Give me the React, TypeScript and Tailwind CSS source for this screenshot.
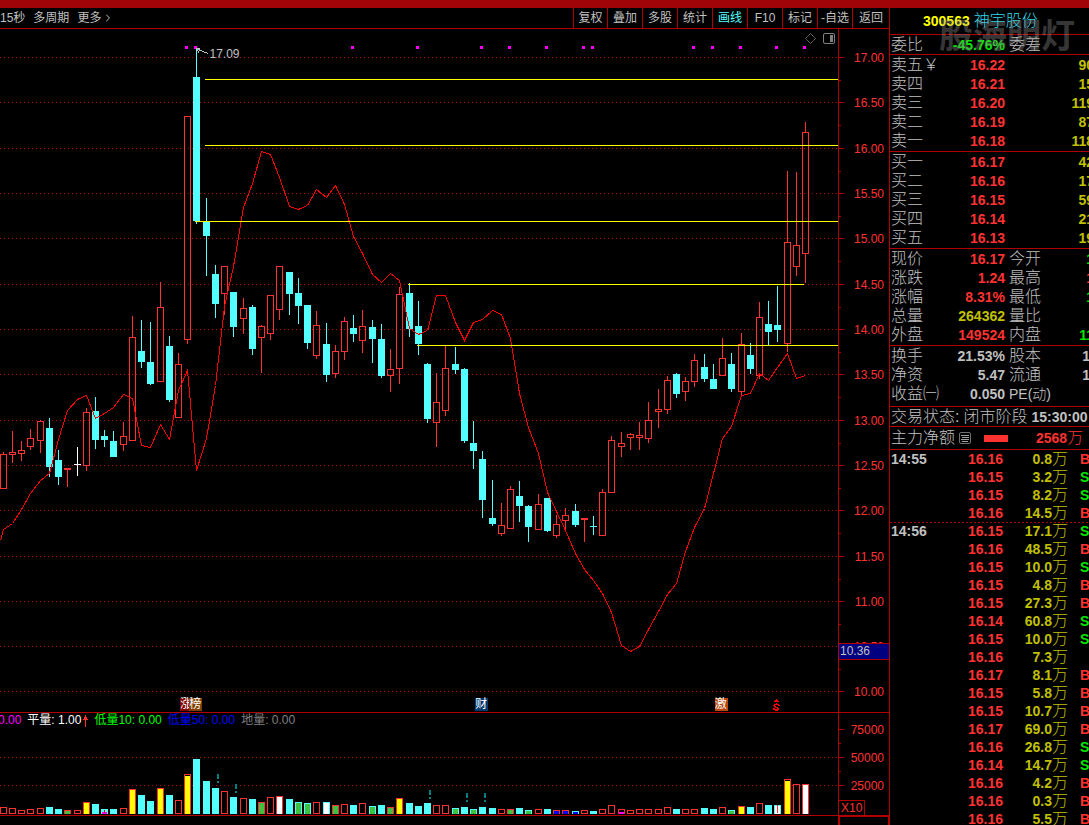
import { ChevronRight } from "lucide-react";

type Kind = "up" | "down" | "flat";
// x centre, high, body top, body bottom, low, direction
type Candle = [number, number, number, number, number, Kind];

const candles: Candle[] = [
  [3, 452, 454, 489, 489, "up"], [12, 431, 452, 455, 463, "up"], [21, 441, 450, 454, 461, "up"],
  [30, 429, 438, 447, 450, "up"], [40, 420, 421, 441, 453, "up"], [49, 418, 428, 467, 477, "down"],
  [58, 450, 460, 477, 485, "down"], [67, 468, 468, 470, 487, "up"], [77, 447, 464, 465, 476, "flat"],
  [86, 408, 412, 466, 471, "up"], [95, 397, 411, 440, 449, "down"], [104, 430, 436, 440, 447, "down"],
  [113, 431, 441, 457, 457, "down"], [123, 422, 436, 445, 451, "up"], [132, 316, 337, 441, 441, "up"],
  [141, 320, 351, 362, 368, "down"], [150, 322, 362, 384, 385, "down"], [160, 282, 307, 382, 382, "up"],
  [169, 336, 346, 400, 402, "down"], [178, 353, 364, 418, 418, "up"], [187, 116, 116, 340, 344, "up"],
  [196, 49, 77, 221, 224, "down"], [206, 198, 222, 236, 276, "down"], [215, 265, 274, 304, 318, "down"],
  [224, 266, 266, 294, 315, "up"], [233, 292, 292, 327, 337, "down"], [243, 298, 308, 319, 334, "up"],
  [252, 305, 307, 349, 355, "down"], [261, 325, 326, 338, 373, "up"], [270, 295, 295, 334, 340, "up"],
  [279, 266, 266, 310, 320, "up"], [289, 272, 272, 294, 315, "down"], [298, 278, 293, 306, 324, "down"],
  [307, 305, 305, 343, 349, "down"], [316, 311, 325, 356, 359, "up"], [326, 323, 344, 375, 382, "down"],
  [335, 345, 351, 374, 378, "up"], [344, 317, 321, 352, 360, "up"], [353, 315, 328, 334, 342, "down"],
  [362, 310, 326, 341, 353, "up"], [372, 320, 327, 339, 363, "down"], [381, 324, 339, 376, 378, "down"],
  [390, 349, 369, 376, 392, "up"], [399, 287, 294, 369, 384, "up"], [409, 283, 293, 329, 337, "down"],
  [418, 301, 326, 344, 355, "down"], [427, 363, 364, 419, 423, "down"], [436, 373, 402, 423, 447, "up"],
  [445, 346, 368, 411, 416, "up"], [455, 347, 364, 370, 374, "down"], [464, 368, 369, 441, 443, "down"],
  [473, 421, 443, 451, 469, "down"], [482, 451, 459, 500, 518, "down"], [492, 480, 518, 524, 526, "down"],
  [501, 503, 525, 534, 536, "up"], [510, 486, 489, 529, 529, "up"], [519, 481, 496, 506, 522, "down"],
  [528, 505, 506, 527, 542, "down"], [538, 494, 504, 530, 530, "up"], [547, 498, 498, 531, 532, "down"],
  [556, 515, 524, 536, 538, "up"], [565, 508, 515, 521, 529, "up"], [575, 504, 511, 525, 527, "down"],
  [584, 518, 518, 520, 542, "up"], [593, 516, 526, 527, 535, "down"], [602, 489, 492, 536, 536, "up"],
  [611, 436, 440, 493, 493, "up"], [621, 432, 443, 447, 457, "up"], [630, 433, 434, 438, 450, "up"],
  [639, 422, 435, 438, 450, "up"], [648, 402, 420, 439, 443, "up"], [658, 389, 409, 412, 428, "up"],
  [667, 376, 380, 410, 414, "up"], [676, 373, 374, 394, 398, "down"], [685, 377, 381, 392, 401, "up"],
  [694, 354, 360, 382, 387, "up"], [704, 354, 367, 379, 382, "down"], [713, 364, 379, 389, 389, "down"],
  [722, 338, 358, 376, 376, "up"], [731, 353, 364, 389, 392, "down"], [741, 333, 344, 392, 396, "up"],
  [750, 343, 355, 369, 374, "down"], [759, 302, 317, 376, 379, "up"], [768, 301, 324, 332, 345, "down"],
  [777, 286, 325, 330, 342, "down"], [787, 171, 242, 344, 352, "up"], [796, 172, 245, 267, 276, "up"],
  [805, 122, 132, 254, 283, "up"],
];

// Volume bar tops; the letter after the colour marks the fill inside the bar
const volumes: string[] = (
  "807r 808r 810r 809r 808r 807c 809c 810rg 810r 802ry 804c 809cm 809c 808r 789ry 795c 801c 788ry 795c 800r 774ry " +
  "759c 781c 788c 791r 797c 798r 799c 802rg 797r 796rw 799c 802cg 803cg 802r 802cw 805rg 804r 805c 803r 806cg 805c " +
  "807rg 798ry 803c 806c 803c 805r 805r 808cg 807c 809cg 807c 808c 809r 809rg 808c 810cg 809r 809c 810rb 810rb 811cb " +
  "810r 811c 809r 805r 809rm 810r 809r 809r 809r 807r 809c 809r 809r 808c 809c 807r 810cg 806ry 807c 803r 805c 805cw " +
  "779ry 784r 784rw"
).split(" ");

const fills: Record<string, string> = { g: "#40c040", y: "#ffff00", m: "#ff00ff", w: "#ffffff", b: "#0000ff" };

const curve =
  "0,540 3,529 12,523 21,509 30,493 40,480 49,473 58,439 67,410 77,399 86,395 95,418 104,413 113,407 123,394 132,398 " +
  "141,445 150,447 160,424 169,439 178,390 187,370 196,470 206,438 215,385 224,306 233,266 243,207 252,183 261,151 " +
  "270,154 279,177 289,206 298,209 307,205 316,189 326,197 335,185 344,204 353,236 362,253 372,274 381,282 390,273 " +
  "399,280 409,328 418,334 427,330 436,295 445,295 455,322 464,340 473,322 482,319 492,310 501,314 510,338 519,393 " +
  "528,427 538,453 547,492 556,511 565,530 575,553 584,569 593,580 602,593 611,612 621,645 630,651 639,646 648,629 " +
  "658,611 667,594 676,583 685,551 694,527 704,508 713,473 722,438 731,426 741,395 750,393 759,373 768,380 777,367 " +
  "787,353 796,378 805,375";

const priceTicks: [number, string][] = [
  [57, "17.00"], [102, "16.50"], [148, "16.00"], [193, "15.50"], [238, "15.00"], [284, "14.50"], [329, "14.00"],
  [374, "13.50"], [420, "13.00"], [465, "12.50"], [510, "12.00"], [556, "11.50"], [601, "11.00"], [646, "10.50"],
  [691, "10.00"],
];
const volumeTicks: [number, string][] = [[729, "75000"], [757, "50000"], [785, "25000"]];
const signalDots = [186, 195, 352, 417, 481, 509, 546, 583, 592, 693, 712, 740, 776, 804];
const drawnLines = [[205, 838, 79], [205, 838, 145], [195, 838, 221], [408, 804, 284], [417, 838, 345]];
const alerts = [[217, 774], [235, 784], [429, 790], [466, 793], [484, 793]];

function Grid({ ys }: { ys: number[] }) {
  return (
    <g stroke="#b00000" strokeDasharray="1 3">
      {ys.map((y) => <line key={y} x1={0} x2={838} y1={y + 0.5} y2={y + 0.5} />)}
    </g>
  );
}

function CandleShape({ data }: { data: Candle }) {
  const [x, high, top, bottom, low, kind] = data;
  const color = kind === "up" ? "#ff3232" : kind === "down" ? "#54ffff" : "#ffffff";
  if (kind === "up" && bottom - top > 2) {
    return (
      <g fill={color}>
        <rect x={x} y={high} width={1} height={top - high} />
        <rect x={x} y={bottom} width={1} height={low - bottom} />
        <rect x={x - 2.5} y={top + 0.5} width={6} height={bottom - top - 1} fill="none" stroke={color} />
      </g>
    );
  }
  return (
    <g fill={color}>
      <rect x={x} y={high} width={1} height={low - high} />
      <rect x={x - 3} y={top} width={7} height={bottom - top} />
    </g>
  );
}

function VolumeBar({ code, x }: { code: string; x: number }) {
  const top = parseInt(code, 10);
  const edge = code[3] === "r" ? "#ff3232" : "#54ffff";
  const inner = code[4];
  return (
    <g>
      {code[3] === "r"
        ? <rect x={x - 2.5} y={top + 0.5} width={6} height={813 - top} fill="none" stroke={edge} />
        : <rect x={x - 3} y={top} width={7} height={814 - top} fill={edge} />}
      {inner && (
        <rect x={x - 2} y={inner === "m" ? 812 : top + 1} width={5} height={inner === "m" ? 2 : 813 - top} fill={fills[inner]} />
      )}
    </g>
  );
}

function PriceChart() {
  return (
    <div className="relative">
      <svg className="block h-[683px] w-full" viewBox="0 29 838 683" preserveAspectRatio="none" shapeRendering="crispEdges" role="img" aria-label="K线图">
        <Grid ys={priceTicks.map((t) => t[0])} />
        {candles.map((c) => <CandleShape key={c[0]} data={c} />)}
        <polyline points={curve} transform="translate(0.5 0.5)" fill="none" stroke="#ff0000" />
        {drawnLines.map(([x1, x2, y]) => <rect key={y} x={x1} y={y} width={x2 - x1} height={1} fill="#ffff00" />)}
        {signalDots.map((x) => <rect key={x} x={x - 1} y={46} width={3} height={3} fill="#ff00ff" />)}
        <path d="M196 48.500h4M196 48.500l12 5M197 49l2 4" stroke="#c0c0c0" fill="none" />
        <g stroke="#808080" fill="none" shapeRendering="auto">
          <path d="M810.500 33.500l5 5-5 5-5-5z" strokeDasharray="1.500 0.500" />
          <rect x="823.500" y="33.500" width="11" height="10" rx="1.500" />
          <rect x="830" y="35" width="3" height="7" fill="#808080" stroke="none" />
        </g>
      </svg>
      <span className="absolute left-[25%] top-[17px] text-xs leading-4 text-[#c0c0c0]">17.09</span>
      <div className="absolute bottom-px left-[21.500%] flex text-[12px] leading-[13px] text-white">
        <span className="w-[9px] bg-[#800000]">涨</span>
        <span className="w-[13px] bg-[#804000]">榜</span>
      </div>
      <span className="absolute bottom-px left-[56.700%] w-[13px] bg-[#003870] text-[12px] leading-[13px] text-white">财</span>
      <span className="absolute bottom-px left-[85.300%] w-[13px] bg-[#b84810] text-[12px] leading-[13px] text-white">激</span>
      <svg className="absolute bottom-px left-[92.200%] h-[12px] w-[7px]" viewBox="0 0 7 12" fill="#ff0000" shapeRendering="crispEdges" aria-hidden="true">
        <path d="M3 0h1v1h1v1h1v1H1V2h1V1h1zM3 4h1v1h2v1h1v1H5V6H2v1h1v1h2v1h1v2H5v1H2v-1H0V9h2v1h2V9H2V8H1V7H0V6h1V5h2z" />
      </svg>
    </div>
  );
}

function VolumeChart() {
  return (
    <svg className="block h-[85px] w-full" viewBox="0 730 838 85" preserveAspectRatio="none" shapeRendering="crispEdges" role="img" aria-label="成交量">
      <Grid ys={[757, 785]} />
      {volumes.map((v, i) => <VolumeBar key={i} code={v} x={candles[i][0]} />)}
      <rect x={785} y={780} width={5} height={1} fill="#000000" />
      <rect x={185} y={775} width={5} height={1} fill="#000000" />
      <rect x={777} y={805} width={1} height={8} fill="#ff3232" />
      <rect x={104} y={810} width={1} height={3} fill="#ff0000" />
      {alerts.map(([x, y]) => (
        <path key={x} d={`M${x} ${y}h2v5h-2zM${x} ${y + 7}h2v2h-2z`} fill="#008080" />
      ))}
    </svg>
  );
}

function Axis() {
  return (
    <div className="flex w-[51px] shrink-0 flex-col border-l border-[#b00000]">
      <svg className="block h-[787px] w-[50px]" viewBox="839 29 50 787" shapeRendering="crispEdges" fontFamily="Liberation Sans, sans-serif" fontSize="12">
        {[...priceTicks, ...volumeTicks].map(([y, label], i) => (
          <g key={label}>
            <rect x={839} y={y} width={5} height={1} fill="#b00000" />
            {i !== 14 && i !== 17 && <rect x={839} y={y + (i > 14 ? 14 : 23)} width={2} height={1} fill="#b00000" />}
            <text x={884} y={y + 5} textAnchor="end" fill="#ff3232">{label}</text>
          </g>
        ))}
        <rect x={839} y={712} width={50} height={1} fill="#b00000" />
        <rect x={838} y={643} width={51} height={17} fill="#000080" />
        <rect x={839} y={643} width={50} height={1} fill="#b00000" />
        <rect x={839} y={659} width={50} height={1} fill="#b00000" />
        <text x={840} y={655} fill="#c0c0c0">10.36</text>
        <path d="M839 800.500h25.500V815" fill="none" stroke="#b00000" />
        <text x={841} y={812} fill="#ff3232">X10</text>
        <rect x={839} y={815} width={50} height={1} fill="#b00000" />
      </svg>
      <div className="flex-1 border-l border-r border-t border-[#b00000]" />
    </div>
  );
}

const tools = ["叠加", "多股", "统计", "画线", "F10", "标记", "-自选"];

function Toolbar() {
  return (
    <nav className="flex h-[21px] items-stretch border-b border-[#b00000] text-xs text-[#c0c0c0]">
      <div className="flex flex-1 items-center gap-2">
        <button>15秒</button>
        <button>多周期</button>
        <button className="flex items-center gap-px">更多<ChevronRight size={12} strokeWidth={2} /></button>
      </div>
      <button className="w-[34px] border-l border-[#b00000]">复权</button>
      {tools.map((t) => (
        <button key={t} className={`w-[35px] whitespace-nowrap border-l border-[#b00000] ${t === "画线" ? "text-[#54ffff]" : ""}`}>{t}</button>
      ))}
      <button className="w-[37px] border-l border-[#b00000]">返回</button>
    </nav>
  );
}

function Legend() {
  return (
    <div className="flex h-[17px] items-center gap-1.5 whitespace-nowrap pb-0.5 text-xs leading-[15px]">
      <span className="-ml-0.5 text-[#ff00ff]">0.00</span>
      <span className="text-white">平量: 1.00</span>
      <svg className="-ml-1 h-3 w-[5px]" viewBox="0 0 5 12" fill="#ff3232" aria-hidden="true"><path d="M2 0h1v2h1v2h1v1H3v7H2V5H0V4h1V2h1z" /></svg>
      <span className="text-[#00ff00]">低量10: 0.00</span>
      <span className="text-[#0000ff]">低量50: 0.00</span>
      <span className="text-[#808080]">地量: 0.00</span>
    </div>
  );
}

const R = "text-[#ff3232]";
const G = "text-[#00e600]";
const Y = "text-[#c0c000]";
const W = "text-[#c0c0c0]";

type QuoteRow = [string, string, string, string, string, string];

function QuoteTable({ rows, pad = "pb-px" }: { rows: QuoteRow[]; pad?: string }) {
  return (
    <div className={`border-b border-[#b00000] ${pad}`}>
      <table className="w-[204px] table-fixed border-collapse leading-[18px]">
        <colgroup><col className="w-[50px]" /><col className="w-[65px]" /><col className="w-[46px]" /><col /></colgroup>
        <tbody>
          {rows.map(([label, value, tone, label2, value2, tone2]) => (
            <tr key={label} className="h-[19px]">
              <th scope="row" className="whitespace-nowrap p-0 pl-px text-left align-middle text-base font-light leading-[18px]">{label}</th>
              <td className={`p-0 text-right align-middle font-bold ${tone}`}>{value}</td>
              <td className={`whitespace-nowrap p-0 pl-1 align-middle font-light ${label2.startsWith("PE") ? "text-sm leading-[18px]" : "text-base leading-[18px]"}`}>{label2}</td>
              <td className={`p-0 text-right align-middle font-bold ${tone2}`}>{value2}</td>
            </tr>
          ))}
        </tbody>
      </table>
    </div>
  );
}

const asks: QuoteRow[] = [
  ["卖五￥", "16.22", R, "", "90", Y], ["卖四", "16.21", R, "", "15", Y], ["卖三", "16.20", R, "", "119", Y],
  ["卖二", "16.19", R, "", "87", Y], ["卖一", "16.18", R, "", "118", Y],
];
const bids: QuoteRow[] = [
  ["买一", "16.17", R, "", "42", Y], ["买二", "16.16", R, "", "17", Y], ["买三", "16.15", R, "", "59", Y],
  ["买四", "16.14", R, "", "21", Y], ["买五", "16.13", R, "", "19", Y],
];
const summary: QuoteRow[] = [
  ["现价", "16.17", R, "今开", "1", G], ["涨跌", "1.24", R, "最高", "1", R], ["涨幅", "8.31%", R, "最低", "1", G],
  ["总量", "264362", Y, "量比", "", W], ["外盘", "149524", R, "内盘", "11", G],
];
const finance: QuoteRow[] = [
  ["换手", "21.53%", W, "股本", "1.", W], ["净资", "5.47", W, "流通", "1.", W], ["收益㈠", "0.050", W, "PE(动)", "", W],
];

const trades: [string, string, string, string][] = [
  ["14:55", "16.16", "0.8", "B"], ["", "16.15", "3.2", "S"], ["", "16.15", "8.2", "S"], ["", "16.16", "14.5", "B"],
  ["14:56", "16.15", "17.1", "S"], ["", "16.16", "48.5", "B"], ["", "16.15", "10.0", "S"], ["", "16.15", "4.8", "B"],
  ["", "16.15", "27.3", "B"], ["", "16.14", "60.8", "S"], ["", "16.15", "10.0", "S"], ["", "16.16", "7.3", ""],
  ["", "16.17", "8.1", "B"], ["", "16.15", "5.8", "B"], ["", "16.15", "10.7", "B"], ["", "16.17", "69.0", "B"],
  ["", "16.16", "26.8", "S"], ["", "16.14", "14.7", "S"], ["", "16.16", "4.2", "B"], ["", "16.16", "0.3", "B"],
  ["", "16.16", "5.5", "B"],
];

function QuotePanel() {
  return (
    <aside className="relative w-[200px] shrink-0 overflow-hidden border-l border-[#b00000] text-sm text-[#c0c0c0]">
      <h1 className="flex h-[27px] items-center gap-1 whitespace-nowrap border-b border-[#b00000] pl-[33px]">
        <span className="font-bold text-[#ffff00]">300563</span>
        <span className="text-base font-light text-[#30d8e8]">神宇股份</span>
      </h1>
      <QuoteTable rows={[["委比", "-45.76%", G, "委差", "-", G]]} pad="pb-0" />
      <QuoteTable rows={asks} />
      <QuoteTable rows={bids} />
      <QuoteTable rows={summary} />
      <QuoteTable rows={finance} pad="pb-[3px]" />
      <div className="flex h-[20px] items-center gap-1 whitespace-nowrap border-b border-[#b00000] pl-px">
        <span className="text-base font-light">交易状态:</span>
        <span className="text-base font-light">闭市阶段</span>
        <span className="font-bold">15:30:00</span>
      </div>
      <div className="flex h-[23px] items-center whitespace-nowrap border-b border-[#b00000] pl-px">
        <span className="text-base font-light">主力净额</span>
        <svg className="ml-1 size-3" viewBox="0 0 12 12" fill="none" stroke="#707070" aria-hidden="true">
          <rect x="0.500" y="0.500" width="11" height="11" rx="1.500" />
          <path d="M2 3.500h8M3 5.500h7M2 7.500h8M3 9.500h6" stroke="#a0a0a0" />
        </svg>
        <span className="ml-[13px] h-[7px] w-6 bg-[#ff3232]" />
        <span className="ml-7 font-bold text-[#ff3232]">2568</span>
        <span className="text-base font-light text-[#ff3232]">万</span>
      </div>
      <table className="w-[204px] table-fixed border-collapse font-bold">
        <colgroup><col className="w-[50px]" /><col className="w-[63px]" /><col className="w-[65px]" /><col /></colgroup>
        <tbody>
          {trades.map(([time, price, amount, side], i) => (
            <tr key={i} className={`h-[18px] leading-[18px] ${time === "14:56" ? "bg-[repeating-linear-gradient(90deg,#b00000_0_2px,transparent_2px_4px)] bg-[length:100%_1px] bg-no-repeat" : ""}`}>
              <td className="p-0 pl-px">{time}</td>
              <td className="p-0 text-right text-[#ff3232]">{price}</td>
              <td className="p-0 text-[#c0c000]">
                <div className="flex h-[18px] items-center justify-end">{amount}<span className="text-base font-light leading-[18px]">万</span></div>
              </td>
              <td className={`p-0 pl-3 ${side === "S" ? "text-[#00e600]" : "text-[#ff3232]"}`}>{side}</td>
            </tr>
          ))}
        </tbody>
      </table>
      <span className="pointer-events-none absolute left-[49px] top-2 whitespace-nowrap text-[34px] font-bold leading-10 text-[#909090]/40">股海明灯</span>
    </aside>
  );
}

export default function App() {
  return (
    <div className="flex h-screen flex-col overflow-hidden bg-black font-['Liberation_Sans','Noto_Sans_CJK_SC',sans-serif]">
      <div className="h-2 shrink-0 bg-[#a00408]" />
      <div className="flex min-h-0 flex-1">
        <main className="flex min-w-0 flex-1 flex-col">
          <Toolbar />
          <div className="flex min-h-0 flex-1">
            <div className="min-w-0 flex-1">
              <PriceChart />
              <div className="border-y border-[#b00000]">
                <Legend />
                <VolumeChart />
              </div>
            </div>
            <Axis />
          </div>
        </main>
        <QuotePanel />
      </div>
    </div>
  );
}
